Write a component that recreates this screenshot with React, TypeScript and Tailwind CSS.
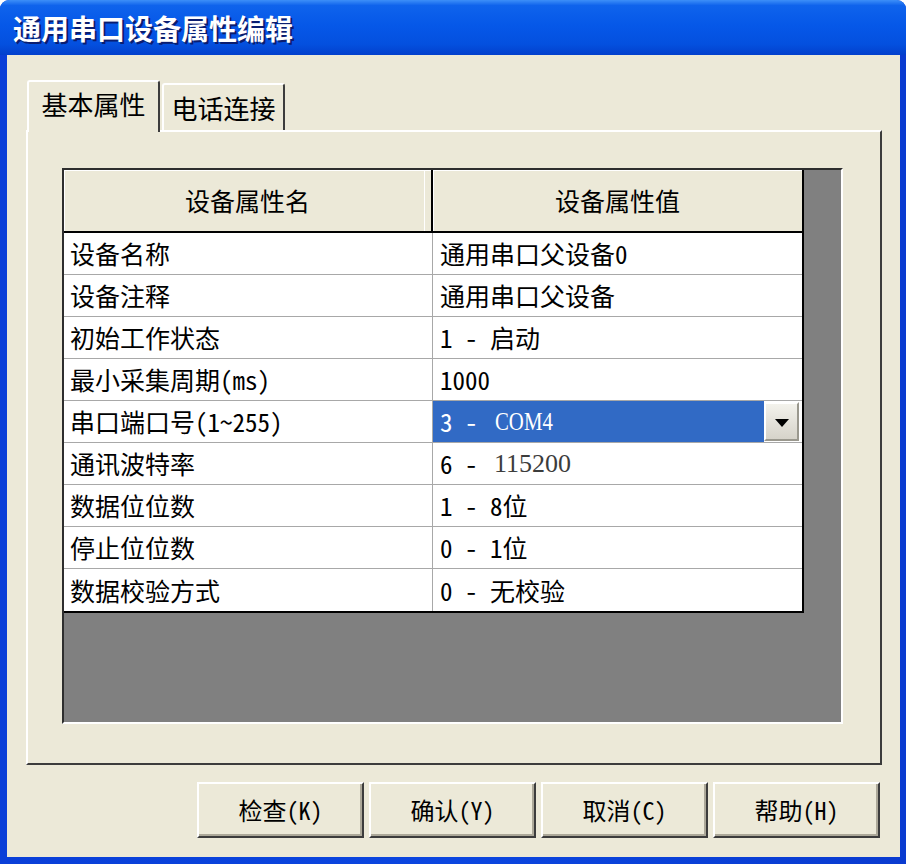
import React from 'react';

const cjk = "font-['Noto_Sans_CJK_SC',sans-serif] [font-feature-settings:'hwid']";

const rows: { name: string; value: React.ReactNode; selected?: boolean }[] = [
  { name: '设备名称', value: '通用串口父设备0' },
  { name: '设备注释', value: '通用串口父设备' },
  { name: '初始工作状态', value: '1 - 启动' },
  { name: '最小采集周期(ms)', value: '1000' },
  {
    name: '串口端口号(1~255)',
    selected: true,
    value: (
      <>
        3 - <span className="inline-block origin-left scale-x-[0.8] font-['Liberation_Serif',serif] text-[26px] ml-[5px]">COM4</span>
      </>
    ),
  },
  {
    name: '通讯波特率',
    value: (
      <>
        6 - <span className="font-['Liberation_Serif',serif] text-[26px] text-[#3c3c3c] ml-[4px]">115200</span>
      </>
    ),
  },
  { name: '数据位位数', value: '1 - 8位' },
  { name: '停止位位数', value: '0 - 1位' },
  { name: '数据校验方式', value: '0 - 无校验' },
];

const buttons = ['检查(K)', '确认(Y)', '取消(C)', '帮助(H)'];

const App = () => {
  return (
    <div className="w-[916px] h-[864px] bg-white">
      <div className="w-[906px] h-[864px] flex flex-col rounded-t-[9px] overflow-hidden bg-[linear-gradient(to_right,#0a3fd8,#0b46e0_50%,#0a3bd0)]">
        {/* title bar */}
        <div className="h-[55px] shrink-0 flex items-center pl-[13px] bg-[linear-gradient(to_bottom,#3d8ff8_0%,#0f63ec_10%,#0658e8_45%,#0450df_80%,#0340cc_100%)]">
          <span className={`${cjk} text-white text-[28px] font-bold leading-none [text-shadow:2px_2px_0_#0a1d70]`}>
            通用串口设备属性编辑
          </span>
        </div>

        {/* dialog body */}
        <div className={`${cjk} flex-1 ml-[7px] mr-[6px] mb-[7px] bg-[#ece9d8] flex flex-col text-black`}>
          {/* tabs */}
          <div className="flex items-end pl-[20px] pt-[25px]">
            <div className="relative z-10 -mb-[2px] w-[133px] h-[52px] flex items-center justify-center pb-[6px] bg-[#ece9d8] border-l-2 border-t-2 border-r-2 border-l-white border-t-white border-r-[#3c3c3c] rounded-t-[3px] text-[26px] leading-none">
              基本属性
            </div>
            <div className="ml-[2px] w-[123px] h-[47px] flex items-center justify-center bg-[#ece9d8] border-l-2 border-t-2 border-r-2 border-l-white border-t-white border-r-[#3c3c3c] rounded-t-[3px] text-[26px] leading-none">
              电话连接
            </div>
          </div>

          {/* tab panel */}
          <div className="ml-[19px] w-[856px] h-[635px] border-2 border-l-white border-t-white border-r-[#3c3c3c] border-b-[#3c3c3c] pl-[34px] pt-[36px]">
            {/* grid control */}
            <div className="w-[781px] h-[556px] border-2 border-l-[#2e2e2e] border-t-[#2e2e2e] border-r-white border-b-white bg-[#808080]">
              <div className="w-[740px] border-r-2 border-b-2 border-black bg-white">
                {/* header */}
                <div className="h-[63px] flex border-b-2 border-black bg-[#ece9d8] text-[25px] leading-none">
                  <div className="w-[369px] border-r-2 border-black flex items-center justify-center shadow-[inset_1px_1px_0_#fff,inset_-6px_0_0_#ece9d8,inset_-7px_0_0_#fff]">
                    设备属性名
                  </div>
                  <div className="flex-1 flex items-center justify-center shadow-[inset_1px_1px_0_#fff]">
                    设备属性值
                  </div>
                </div>
                {/* rows */}
                {rows.map((r, i) => (
                  <div
                    key={r.name}
                    className={`h-[42px] flex text-[25px] leading-none ${i < rows.length - 1 ? 'border-b border-[#a8a8a8]' : ''}`}
                  >
                    <div className="w-[369px] border-r border-[#a8a8a8] flex items-center pl-[6px] whitespace-pre">
                      {r.name}
                    </div>
                    {r.selected ? (
                      <div className="flex-1 flex items-stretch">
                        <div className="flex-1 bg-[#316ac5] text-white flex items-center pl-[7px] whitespace-pre">
                          {r.value}
                        </div>
                        <div className="w-[35px] my-[1px] flex items-center justify-center bg-[linear-gradient(to_bottom,#f3f2ec,#d6d3ca)] border-2 border-l-white border-t-white border-r-[#9a988e] border-b-[#9a988e]">
                          <div className="w-0 h-0 border-l-[7px] border-r-[7px] border-t-[8px] border-l-transparent border-r-transparent border-t-black mt-[2px]" />
                        </div>
                        <div className="w-[3px]" />
                      </div>
                    ) : (
                      <div className="flex-1 flex items-center pl-[7px] whitespace-pre">{r.value}</div>
                    )}
                  </div>
                ))}
              </div>
            </div>
          </div>

          {/* buttons */}
          <div className="flex justify-end gap-[5px] pr-[20px] mt-[17px]">
            {buttons.map((b) => (
              <button
                key={b}
                className="w-[167px] h-[56px] flex items-center justify-center bg-[#ece9d8] border-2 border-l-white border-t-white border-r-[#3c3c3c] border-b-[#3c3c3c] shadow-[inset_-2px_-2px_0_#aca899] text-[24px] leading-none"
              >
                {b}
              </button>
            ))}
          </div>
        </div>
      </div>
    </div>
  );
};

export default App;
